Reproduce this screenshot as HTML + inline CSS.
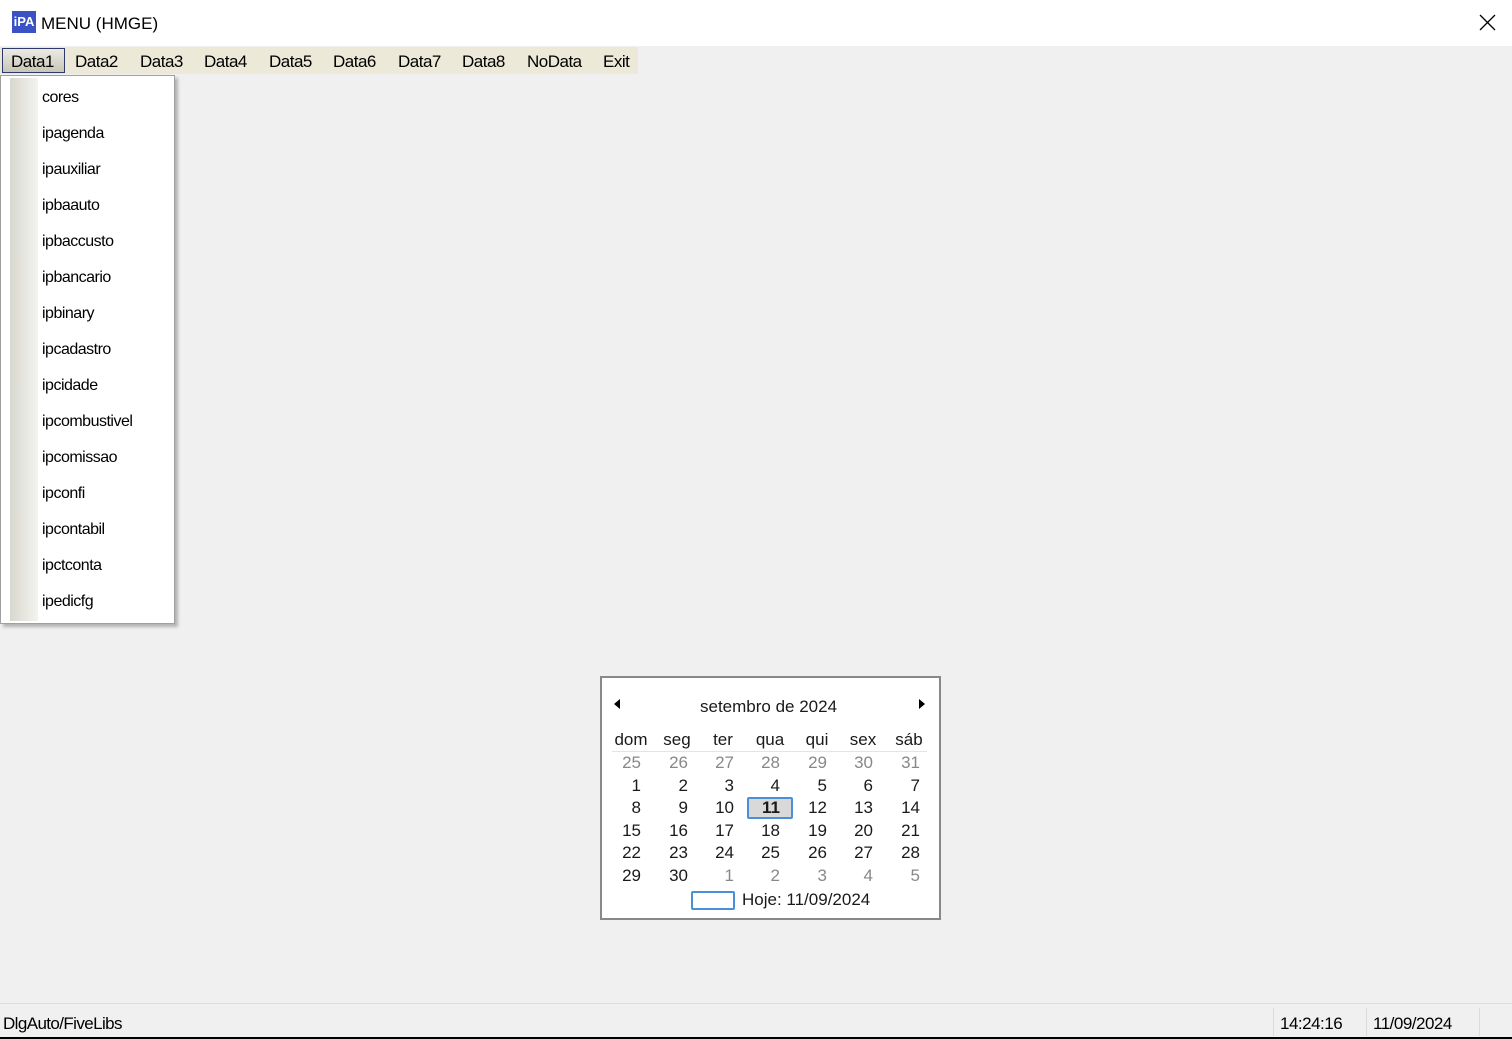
<!DOCTYPE html>
<html><head><meta charset="utf-8"><style>
*{margin:0;padding:0;box-sizing:border-box}
body{width:1512px;height:1039px;background:#f0f0f0;font-family:"Liberation Sans",sans-serif;position:relative;overflow:hidden;color:#000}
.a{position:absolute;white-space:nowrap}
#title{left:0;top:0;width:1512px;height:46px;background:#fff}
#menubar{left:0;top:47px;width:638px;height:27px;background:#ece9d8}
.m{font-size:17px;top:52px;letter-spacing:-0.5px}
#pop{left:0;top:75px;width:175px;height:549px;background:#fff;border:1px solid #a0a0a0;box-shadow:3px 3px 3px rgba(0,0,0,.25)}
#strip{left:9px;top:2px;width:28px;height:543px;background:linear-gradient(90deg,#d8d8d0,#f4f4ee)}
.it{font-size:16px;left:42px;letter-spacing:-0.5px}
#cal{left:600px;top:676px;width:341px;height:244px;background:#fff;border:2px solid #888}
.c{font-size:17px;color:#1a1a1a}
.g{color:#888}
.r{text-align:right;width:30px}
</style></head><body>
<div class="a" id="title"></div>
<div class="a" style="left:12px;top:11px;width:24px;height:22px;background:#3b52c4;color:#fff;font:bold 13px 'Liberation Sans';text-align:center;line-height:22px">iPA</div>
<div class="a" style="left:41px;top:14px;font-size:17px">MENU (HMGE)</div>
<svg class="a" style="left:1479px;top:14px" width="17" height="17"><path d="M1 1L16 16M16 1L1 16" stroke="#000" stroke-width="1.3"/></svg>
<div class="a" id="menubar"></div>
<div class="a" style="left:2px;top:48px;width:63px;height:25px;border:1px solid #2d3a6b;background:linear-gradient(#ecebe4,#c9c6b6)"></div>
<div class="a m" style="left:11px">Data1</div>
<div class="a m" style="left:75px">Data2</div>
<div class="a m" style="left:140px">Data3</div>
<div class="a m" style="left:204px">Data4</div>
<div class="a m" style="left:269px">Data5</div>
<div class="a m" style="left:333px">Data6</div>
<div class="a m" style="left:398px">Data7</div>
<div class="a m" style="left:462px">Data8</div>
<div class="a m" style="left:527px">NoData</div>
<div class="a m" style="left:603px">Exit</div>
<div class="a" id="pop"><div class="a" id="strip"></div></div>
<div class="a it" style="top:89px">cores</div>
<div class="a it" style="top:125px">ipagenda</div>
<div class="a it" style="top:161px">ipauxiliar</div>
<div class="a it" style="top:197px">ipbaauto</div>
<div class="a it" style="top:233px">ipbaccusto</div>
<div class="a it" style="top:269px">ipbancario</div>
<div class="a it" style="top:305px">ipbinary</div>
<div class="a it" style="top:341px">ipcadastro</div>
<div class="a it" style="top:377px">ipcidade</div>
<div class="a it" style="top:413px">ipcombustivel</div>
<div class="a it" style="top:449px">ipcomissao</div>
<div class="a it" style="top:485px">ipconfi</div>
<div class="a it" style="top:521px">ipcontabil</div>
<div class="a it" style="top:557px">ipctconta</div>
<div class="a it" style="top:593px">ipedicfg</div>
<div class="a" id="cal"></div>
<div class="a" style="left:614px;top:699px;width:0;height:0;border-top:5px solid transparent;border-bottom:5px solid transparent;border-right:6px solid #000"></div>
<div class="a" style="left:919px;top:699px;width:0;height:0;border-top:5px solid transparent;border-bottom:5px solid transparent;border-left:6px solid #000"></div>
<div class="a c" style="left:700px;top:697px">setembro de 2024</div>
<div class="a" style="left:612px;top:751px;width:315px;height:1px;background:#e4e4e4"></div>
<div class="a" style="left:747px;top:797px;width:46px;height:22px;background:#d9d9d9;border:2px solid #4a90d9;border-radius:2px"></div>
<div class="a" style="left:691px;top:891px;width:44px;height:19px;border:2px solid #4a90d9;border-radius:2px"></div>
<div class="a c" style="left:742px;top:890px">Hoje: 11/09/2024</div>
<div id="cg"></div>
<script>
var H=["dom","seg","ter","qua","qui","sex","sáb"],cx=[631,677,723,770,817,863,909],rx=[641,688,734,780,827,873,920];
var s="";H.forEach(function(h,i){s+='<div class="a c" style="left:'+(cx[i]-25)+'px;width:50px;text-align:center;top:730px">'+h+'</div>'});
var d=[[25,26,27,28,29,30,31],[1,2,3,4,5,6,7],[8,9,10,11,12,13,14],[15,16,17,18,19,20,21],[22,23,24,25,26,27,28],[29,30,1,2,3,4,5]];
var ys=[753,776,798,821,843,866];
d.forEach(function(r,ri){r.forEach(function(n,ci){var g=(ri==0)||(ri==5&&ci>1);var b=(n==11&&ri==2)?'font-weight:bold;':'';s+='<div class="a c r'+(g?' g':'')+'" style="'+b+'left:'+(rx[ci]-30)+'px;top:'+ys[ri]+'px">'+n+'</div>'})});
document.getElementById('cg').innerHTML=s;
</script>
<div class="a" style="left:0;top:1003px;width:1512px;height:1px;background:#dcdcdc"></div>
<div class="a" style="left:0;top:1037px;width:1512px;height:2px;background:#000"></div>
<div class="a" style="left:1273px;top:1008px;width:1px;height:28px;background:#dcdcdc"></div>
<div class="a" style="left:1366px;top:1008px;width:1px;height:28px;background:#dcdcdc"></div>
<div class="a" style="left:1479px;top:1008px;width:1px;height:28px;background:#dcdcdc"></div>
<div class="a" style="left:3px;top:1014px;font-size:17px;letter-spacing:-0.6px">DlgAuto/FiveLibs</div>
<div class="a" style="left:1280px;top:1014px;font-size:17px;letter-spacing:-0.5px">14:24:16</div>
<div class="a" style="left:1373px;top:1014px;font-size:17px;letter-spacing:-0.5px">11/09/2024</div>
</body></html>
